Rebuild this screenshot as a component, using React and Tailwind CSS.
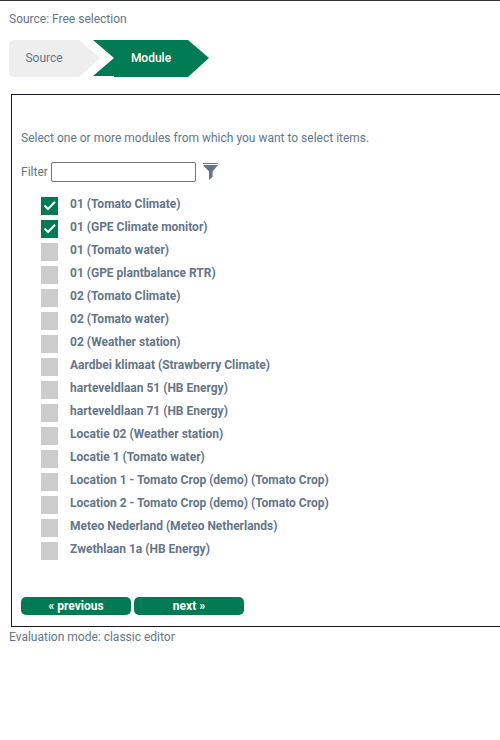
import React, { useState } from 'react';

const modules = [
  '01 (Tomato Climate)',
  '01 (GPE Climate monitor)',
  '01 (Tomato water)',
  '01 (GPE plantbalance RTR)',
  '02 (Tomato Climate)',
  '02 (Tomato water)',
  '02 (Weather station)',
  'Aardbei klimaat (Strawberry Climate)',
  'harteveldlaan 51 (HB Energy)',
  'harteveldlaan 71 (HB Energy)',
  'Locatie 02 (Weather station)',
  'Locatie 1 (Tomato water)',
  'Location 1 - Tomato Crop (demo) (Tomato Crop)',
  'Location 2 - Tomato Crop (demo) (Tomato Crop)',
  'Meteo Nederland (Meteo Netherlands)',
  'Zwethlaan 1a (HB Energy)',
];

const ArrowTip = ({ className }) => (
  <svg className={className} width="21" height="37" viewBox="0 0 21 37" fill="currentColor" aria-hidden="true">
    <path d="M0 0L21 18L0 37Z" />
  </svg>
);

const ArrowTail = ({ className }) => (
  <svg className={className} width="21" height="37" viewBox="0 0 21 37" fill="currentColor" aria-hidden="true">
    <path d="M0 0H21V36H0L21 18Z" />
  </svg>
);

const FilterIcon = () => (
  <svg width="16" height="18" viewBox="0 0 16 18" fill="currentColor" aria-hidden="true">
    <path d="M0 0H15V1H0Z" />
    <path d="M0 2H15L9.6 8.4V14L6 17V8.4Z" />
  </svg>
);

const Steps = () => (
  <ol className="mt-[13px] flex h-[37px]">
    <li className="flex">
      <a href="#source" className="flex w-[70px] items-center justify-center rounded-l-[5px] bg-[#eeeeee] pb-px">
        Source
      </a>
      <ArrowTip className="text-[#eeeeee]" />
    </li>
    <li className="-ml-[7px] flex">
      <ArrowTail className="text-[#007a53]" />
      <a href="#module" aria-current="step" className="flex w-[74px] items-center justify-center bg-[#007a53] pb-px font-medium text-white">
        Module
      </a>
      <ArrowTip className="text-[#007a53]" />
    </li>
  </ol>
);

const ModuleRow = ({ name, checked, onChange }) => (
  <li className="h-[23px]">
    <label className="flex gap-3">
      <span className="relative mt-1 h-[18px] w-[17px]">
        <input
          type="checkbox"
          checked={checked}
          onChange={onChange}
          className="block h-[18px] w-[17px] appearance-none bg-[#cccccc] checked:bg-[#007a53]"
        />
        {checked && (
          <svg
            className="pointer-events-none absolute inset-0 text-white"
            width="17"
            height="18"
            viewBox="0 0 17 18"
            fill="none"
            stroke="currentColor"
            strokeWidth="2"
            aria-hidden="true"
          >
            <path d="M3.5 8.5L7 12L14 4.8" />
          </svg>
        )}
      </span>
      <span className="font-bold leading-[22px]">{name}</span>
    </label>
  </li>
);

const App = () => {
  const [selected, setSelected] = useState([0, 1]);
  const [filter, setFilter] = useState('');

  const toggle = (index) => {
    setSelected(
      selected.includes(index) ? selected.filter((i) => i !== index) : [...selected, index]
    );
  };

  return (
    <div className="border-t border-[#333333] bg-white pl-[9px] font-['Roboto',sans-serif] text-[12px] leading-4 text-[#647687]">
      <p className="mt-[10px]">Source: Free selection</p>
      <Steps />

      <form
        onSubmit={(e) => e.preventDefault()}
        className="ml-[2px] mt-[17px] border-y border-l border-[#1a1333] pb-[11px] pl-[9px] pt-[35px]"
      >
        <p>Select one or more modules from which you want to select items.</p>

        <div className="mt-4 flex items-center gap-[3px]">
          <label htmlFor="filter">Filter</label>
          <input
            id="filter"
            type="text"
            value={filter}
            onChange={(e) => setFilter(e.target.value)}
            className="h-5 w-[145px] rounded-[2px] border border-[#767676] px-1"
          />
          <button type="button" aria-label="Filter modules" className="ml-1">
            <FilterIcon />
          </button>
        </div>

        <ul className="ml-5 mt-[11px]">
          {modules.map((name, index) =>
            name.toLowerCase().includes(filter.toLowerCase()) ? (
              <ModuleRow
                key={name}
                name={name}
                checked={selected.includes(index)}
                onChange={() => toggle(index)}
              />
            ) : null
          )}
        </ul>

        <div className="mt-9 flex gap-[3px]">
          <button type="button" className="h-[18px] w-[110px] rounded-[5px] bg-[#007a53] font-bold text-white">
            « previous
          </button>
          <button type="submit" className="h-[18px] w-[110px] rounded-[5px] bg-[#007a53] font-bold text-white">
            next »
          </button>
        </div>
      </form>

      <p className="mt-[2px]">Evaluation mode: classic editor</p>
    </div>
  );
};

export default App;
